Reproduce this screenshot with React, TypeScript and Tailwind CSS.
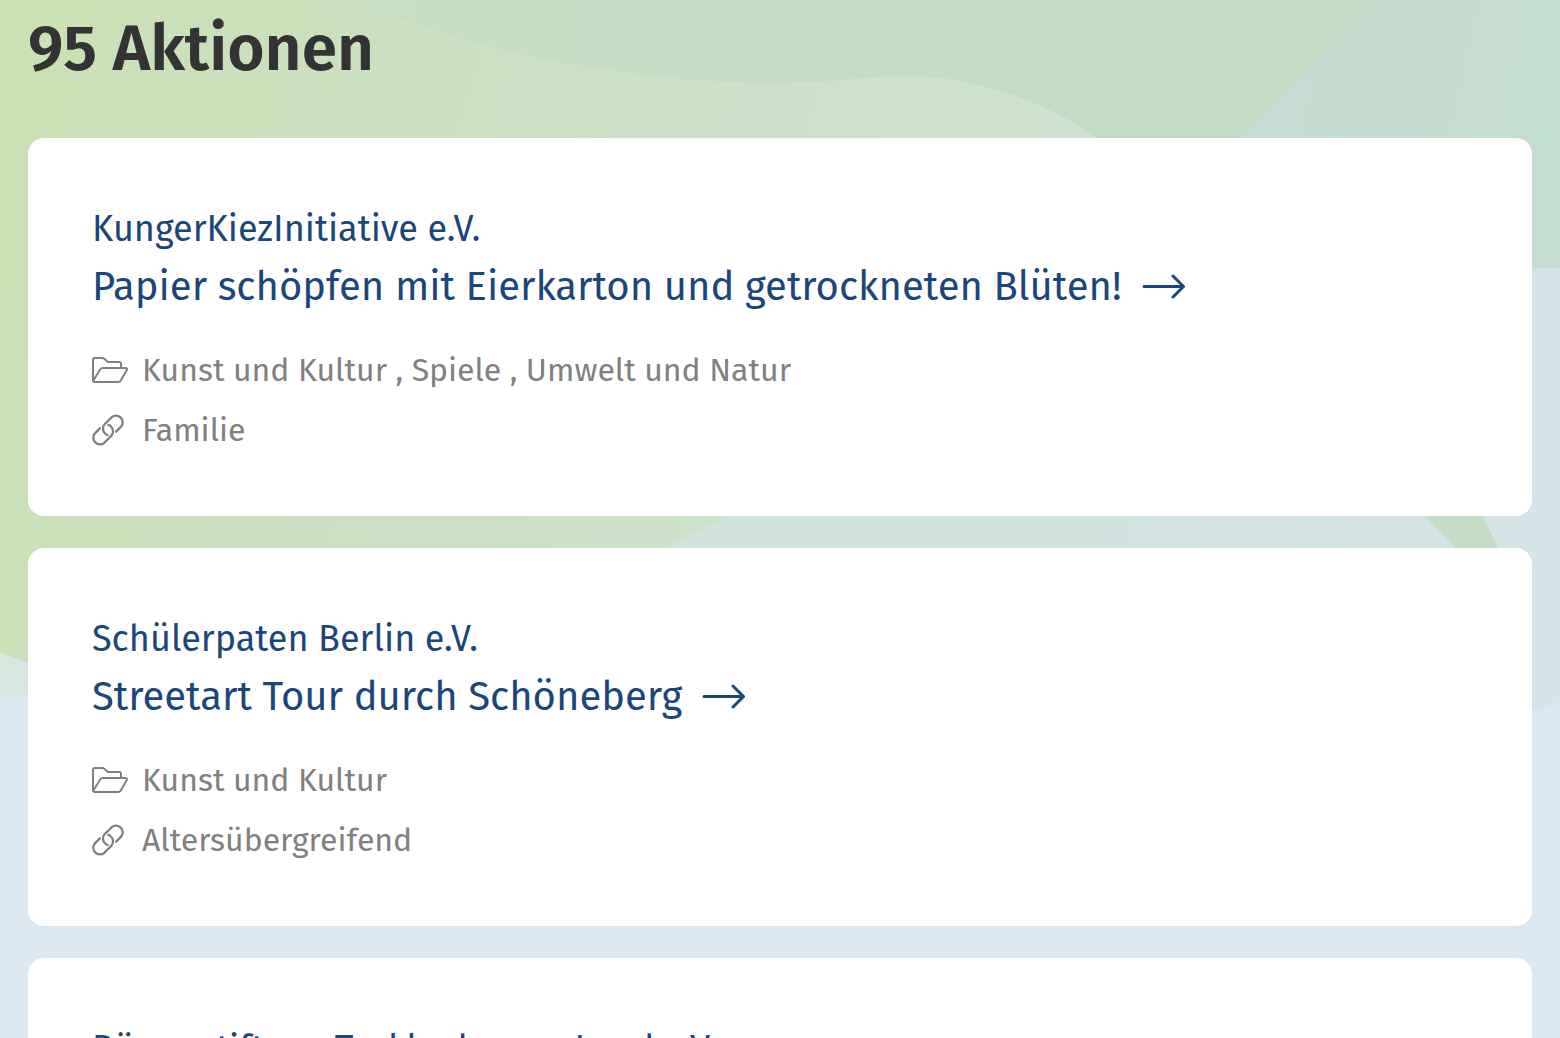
import * as React from "react"

interface Action {
  id: number
  organisation: string
  title: string
  categories: string[]
  audience: string
}

const actions: Action[] = [
  {
    id: 1,
    organisation: "KungerKiezInitiative e.V.",
    title: "Papier schöpfen mit Eierkarton und getrockneten Blüten!",
    categories: ["Kunst und Kultur", "Spiele", "Umwelt und Natur"],
    audience: "Familie",
  },
  {
    id: 2,
    organisation: "Schülerpaten Berlin e.V.",
    title: "Streetart Tour durch Schöneberg",
    categories: ["Kunst und Kultur"],
    audience: "Altersübergreifend",
  },
  {
    id: 3,
    organisation: "Bürgerstiftung Tecklenburger Land e.V.",
    title: "",
    categories: [],
    audience: "",
  },
]

const FolderIcon = () => (
  <svg viewBox="0 0 36 26" className="h-[26px] w-9" fill="none" stroke="currentColor" strokeWidth="2" strokeLinejoin="round" aria-hidden="true">
    <path d="M1.5 24.2C1.2 23.9 1 23.4 1 23V3a2 2 0 0 1 2-2h7.500c.7 0 1.200.2 1.700.7L16 5h11a2 2 0 0 1 2 2v4" />
    <path d="M11.200 11H33.500c1.300 0 1.900 1.100 1.200 2.200L28.800 23.500c-.6 1-1.400 1.500-2.500 1.500H2.700c-1.200 0-1.700-1-1-2L8 12.700C8.800 11.500 9.700 11 11.200 11Z" />
  </svg>
)

const LinkIcon = () => (
  <svg viewBox="1.5 1.5 21 21" className="size-8" fill="none" stroke="currentColor" strokeWidth="1.5" strokeLinecap="round" strokeLinejoin="round" aria-hidden="true">
    <path d="M12.200 8.700c.7.1 1.200.5 1.700 1a4.300 4.300 0 0 1 .2 6.200l-4.500 4.500a4.400 4.400 0 0 1-6.200-6.200l3.300-3.300" />
    <path d="M11.800 15.300c-.7-.1-1.200-.5-1.700-1a4.300 4.300 0 0 1-.2-6.200l4.500-4.500a4.400 4.400 0 0 1 6.200 6.200l-3.300 3.300" />
  </svg>
)

const ArrowIcon = () => (
  <svg viewBox="0 0 44 26" className="h-[26px] w-11 shrink-0" fill="none" stroke="currentColor" strokeWidth="3" strokeLinecap="round" strokeLinejoin="round" aria-hidden="true">
    <path d="M2 12.500H41.500M31 2 41.500 12.500 31 23" />
  </svg>
)

// Decorative waves behind the list
const Waves = () => (
  <svg
    viewBox="0 0 1560 1038"
    preserveAspectRatio="none"
    className="absolute inset-0 -z-10 h-full w-full"
    aria-hidden="true"
  >
    <defs>
      <linearGradient id="mist" x1="0" x2="1560" y1="0" y2="0" gradientUnits="userSpaceOnUse">
        <stop offset="0" stopColor="#d6e7df" />
        <stop offset=".5" stopColor="#cfe3da" />
        <stop offset="1" stopColor="#d5e4e8" />
      </linearGradient>
      <linearGradient id="leaf" x1="0" x2="1050" y1="0" y2="330" gradientUnits="userSpaceOnUse">
        <stop offset="0" stopColor="#cae1b4" />
        <stop offset=".4" stopColor="#cbe0c0" />
        <stop offset="1" stopColor="#cde3d0" />
      </linearGradient>
      <linearGradient id="meadow" x1="350" x2="1400" y1="0" y2="0" gradientUnits="userSpaceOnUse">
        <stop offset="0" stopColor="#c6dfc0" />
        <stop offset=".4" stopColor="#c3ddc5" />
        <stop offset="1" stopColor="#c2dcc5" />
      </linearGradient>
      <linearGradient id="lake" x1="1300" x2="1560" y1="0" y2="60" gradientUnits="userSpaceOnUse">
        <stop offset="0" stopColor="#c4dcd1" />
        <stop offset="1" stopColor="#c3ddce" />
      </linearGradient>
    </defs>
    <rect width="1560" height="1038" fill="#dce8f1" />
    <path d="M0 0H1560V702L1532 710C1300 770 1100 690 700 690L28 696 0 697Z" fill="url(#mist)" />
    <path d="M0 0H1200V300L728 516 664 548C400 680 200 740 28 663L0 652Z" fill="url(#leaf)" />
    <path d="M350 0C470 52 640 83 770 83 835 83 865 76 905 76 975 76 1045 101 1097 138L1425 516 1456 548H1498L1483 516 1400 268H1560V0Z" fill="url(#meadow)" />
    <path d="M1378 0 1240 138V268H1560V0Z" fill="url(#lake)" />
  </svg>
)

const ActionCard = ({ action }: { action: Action }) => (
  <li className="min-h-[378px] rounded-2xl bg-white p-16">
    <a href={`#aktion-${action.id}`} className="block text-[#1b467b]">
      <p className="text-4xl leading-[54px]">{action.organisation}</p>
      {action.title && (
        <h2 className="flex items-center gap-5 text-[40px] leading-[62px]">
          {action.title}
          <ArrowIcon />
        </h2>
      )}
    </a>

    {action.categories.length > 0 && (
      <div className="mt-[30px] space-y-4 text-[32px] leading-[44px] text-[#808080]">
        <div className="flex items-center">
          <span className="w-[50px] shrink-0"><FolderIcon /></span>
          <span>{action.categories.join(" , ")}</span>
        </div>
        <div className="flex items-center">
          <span className="w-[50px] shrink-0"><LinkIcon /></span>
          <span>{action.audience}</span>
        </div>
      </div>
    )}
  </li>
)

export default function App() {
  return (
    <main className="relative isolate h-screen overflow-hidden px-7 font-['Fira_Sans','Noto_Sans',sans-serif]">
      <Waves />
      <h1 className="pt-2 text-[64px] leading-[82px] font-semibold text-[#333333]">95 Aktionen</h1>
      <ul className="mt-12 space-y-8">
        {actions.map((action) => (
          <ActionCard key={action.id} action={action} />
        ))}
      </ul>
    </main>
  )
}
